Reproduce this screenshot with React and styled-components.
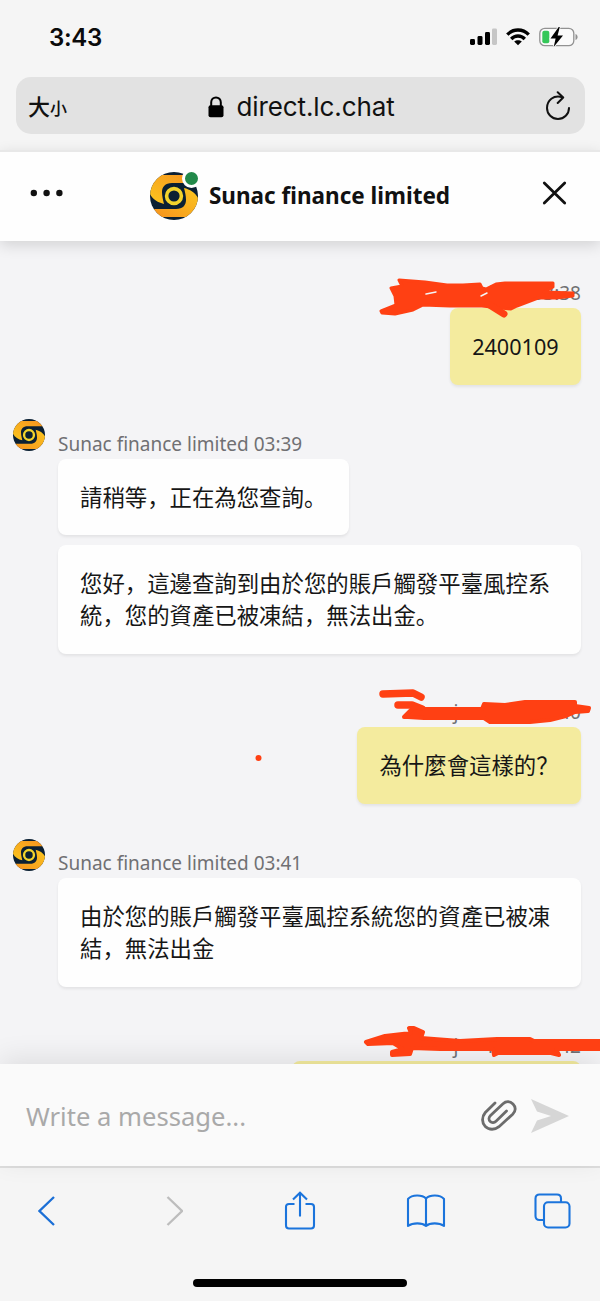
import React from 'react';
import styled, { createGlobalStyle, css } from 'styled-components';

const GlobalStyle = createGlobalStyle`
  * {
    box-sizing: border-box;
  }
  body {
    margin: 0;
    background: #f5f5f5;
  }
`;

const Screen = styled.div`
  position: relative;
  display: flex;
  flex-direction: column;
  width: 600px;
  height: 1301px;
  overflow: hidden;
  background: #f5f5f5;
  color: #111;
  font-family: 'Noto Sans', 'Noto Sans CJK SC', sans-serif;
`;

// Browser chrome

const StatusBar = styled.div`
  display: flex;
  align-items: center;
  justify-content: space-between;
  height: 77px;
  padding: 0 22px 3px 49px;
`;

const Clock = styled.span`
  padding-top: 2px;
  font: 600 24px/30px Inter, sans-serif;
  letter-spacing: -0.3px;
  color: #0b0b0b;
`;

const StatusIcons = styled.div`
  display: flex;
  align-items: center;
  gap: 9px;
`;

const AddressBar = styled.div`
  display: grid;
  grid-template-columns: 100px 1fr 100px;
  align-items: center;
  height: 57px;
  margin: 0 15px 16px 16px;
  padding: 0 14px 0 12px;
  border-radius: 15px;
  background: #e2e2e2;
`;

const TextSize = styled.span`
  padding-top: 2px;
  font: 500 22px/30px 'Noto Sans CJK SC', sans-serif;

  small {
    font-size: 17px;
  }
`;

const Url = styled.span`
  display: flex;
  align-items: center;
  justify-content: center;
  gap: 12px;
  padding: 2px 0 0 4px;
  font: 400 26px/30px Inter, sans-serif;
  letter-spacing: -0.1px;
`;

const Reload = styled.svg`
  justify-self: end;
`;

// Chat header

const Header = styled.header`
  position: relative;
  z-index: 1;
  display: flex;
  align-items: center;
  justify-content: space-between;
  flex: none;
  height: 91px;
  padding: 0 33px 8px 29px;
  border-top: 2px solid #e8e8e8;
  background: #fefefe;
  box-shadow: 0 4px 14px rgba(0, 0, 0, 0.14);
`;

const Brand = styled.div`
  display: flex;
  align-items: center;
  gap: 11px;
  padding: 6px 7px 0 0;
`;

const BrandLogo = styled.div`
  position: relative;
  display: flex;
`;

const OnlineDot = styled.span`
  position: absolute;
  top: -3px;
  right: -3px;
  width: 19px;
  height: 19px;
  border: 3px solid #fefefe;
  border-radius: 50%;
  background: #22894a;
`;

const Title = styled.h1`
  margin: 0;
  font-size: 22.5px;
  line-height: 30px;
  font-weight: 700;
`;

// Messages

const Messages = styled.main`
  flex: none;
  display: flex;
  flex-direction: column;
  gap: 47.8px;
  height: 823px;
  padding: 41px 19px 0 13px;
  overflow: hidden;
  background: #f4f4f6;
`;

const Group = styled.section`
  display: grid;
  grid-template-columns: 32px 1fr;
  column-gap: 13px;
`;

const Avatar = styled.div`
  height: 32px;
  margin-top: -13.5px;
`;

const Thread = styled.div`
  grid-column: 2;
  display: flex;
  flex-direction: column;
  align-items: ${({ $mine }) => ($mine ? 'flex-end' : 'flex-start')};
  gap: 9.5px;
`;

const Meta = styled.div`
  display: flex;
  height: 26px;
  margin-bottom: -9.5px;
  font-size: 19px;
  line-height: 23px;
  color: #707073;
  white-space: pre;
`;

const Initial = styled.span`
  width: ${({ $width }) => $width}px;
`;

const Bubble = styled.p`
  margin: 0;
  min-width: ${({ $minWidth }) => $minWidth || 0}px;
  min-height: 76.8px;
  padding: 21px 22.4px 23.8px 22px;
  border-radius: 8px;
  background: #fefefe;
  box-shadow: 0 2px 3px rgba(0, 0, 0, 0.07);
  font-family: 'Noto Sans CJK SC', sans-serif;
  font-size: 22.4px;
  line-height: 32px;
  color: #161616;
  ${({ $mine }) => $mine && css`
    background: #f4eb9e;
  `}
  ${({ $latin }) => $latin && css`
    padding-top: 22.8px;
    padding-bottom: 22px;
    font-family: 'Noto Sans', sans-serif;
    font-size: 21.6px;
  `}
`;

// Composer

const Composer = styled.div`
  position: relative;
  display: flex;
  align-items: center;
  flex: none;
  height: 102px;
  padding: 2px 31px 0 26px;
  background: #fafafa;
  box-shadow: 0 -6px 26px rgba(0, 0, 0, 0.09);
`;

const Placeholder = styled.span`
  flex: 1;
  font-size: 25.6px;
  color: #a9a9a9;
`;

const ComposerIcons = styled.div`
  display: flex;
  align-items: center;
  gap: 14px;
`;

const Toolbar = styled.nav`
  display: flex;
  align-items: center;
  justify-content: space-between;
  flex: none;
  height: 88px;
  padding: 0 28px;
  border-top: 2px solid #dedede;
`;

const ToolButton = styled.span`
  display: flex;
  justify-content: center;
  width: 40px;
`;

const HomeBar = styled.div`
  flex: none;
  width: 214px;
  height: 8px;
  margin: 25px 0 0 193px;
  border-radius: 4px;
  background: #000;
`;

const Scribbles = styled.svg`
  position: absolute;
  inset: 0;
  z-index: 2;
  pointer-events: none;
`;

function Logo({ size, id }) {
  const swirl = 'M45 11H22C15 11 12 15 12 20C12 24 13 28 14 32C6 30 -1 25 -2 15L6 3H40Z';
  return (
    <svg width={size} height={size} viewBox="0 0 48 48">
      <defs>
        <clipPath id={id}>
          <circle cx="24" cy="24" r="24" />
        </clipPath>
        <linearGradient id={`${id}-fill`} x1="0" y1="1" x2="1" y2="0">
          <stop offset="0" stopColor="#fbc81f" />
          <stop offset="1" stopColor="#f6921e" />
        </linearGradient>
      </defs>
      <g clipPath={`url(#${id})`}>
        <rect width="48" height="48" fill="#0b2033" />
        <path d={swirl} fill={`url(#${id}-fill)`} />
        <path d={swirl} fill={`url(#${id}-fill)`} transform="rotate(180 24 24)" />
        <circle cx="24" cy="24" r="10.8" fill="#0b2033" />
        <circle cx="24" cy="24" r="7.4" fill="none" stroke="#f2d32c" strokeWidth="3.6" />
      </g>
    </svg>
  );
}

function AgentGroup({ time, id, messages }) {
  return (
    <Group>
      <Avatar>
        <Logo size={32} id={id} />
      </Avatar>
      <Thread>
        <Meta>Sunac finance limited {time}</Meta>
        {messages.map((text) => (
          <Bubble key={text}>{text}</Bubble>
        ))}
      </Thread>
    </Group>
  );
}

function VisitorGroup({ time, text, latin, minWidth }) {
  return (
    <Group>
      <Thread $mine>
        <Meta>
          <Initial $width={34}>j</Initial>
          <Initial $width={45}>f</Initial>
          {time}
        </Meta>
        <Bubble $mine $latin={latin} $minWidth={minWidth}>{text}</Bubble>
      </Thread>
    </Group>
  );
}

export default function App() {
  return (
    <Screen>
      <GlobalStyle />
      <StatusBar>
        <Clock>3:43</Clock>
        <StatusIcons>
          <svg width="28" height="18" viewBox="0 0 28 18">
            <rect x="1" y="11" width="5" height="6" rx="1.4" />
            <rect x="8.5" y="8" width="5" height="9" rx="1.4" />
            <rect x="16" y="4" width="5" height="13" rx="1.4" />
            <rect x="23" y="0.5" width="5" height="16.5" rx="1.4" fill="#c6c6c6" />
          </svg>
          <svg width="24" height="18" viewBox="0 0 24 18" fill="none" stroke="#000" strokeWidth="3.3">
            <path d="M1.3 6.7C7.2.4 16.8.4 22.7 6.7" />
            <path d="M5.2 11C9 7 15 7 18.8 11" />
            <path d="M12 17.3L8.2 13.6C10.3 11.7 13.7 11.7 15.8 13.6Z" fill="#000" stroke="none" />
          </svg>
          <svg width="39" height="20" viewBox="0 0 39 20">
            <rect x="0.8" y="1.3" width="34" height="17.4" rx="5" fill="#fafafa" stroke="#929292" strokeWidth="1.3" />
            <path d="M36.5 7C39.3 8 39.3 12 36.5 13Z" fill="#929292" />
            <rect x="3.3" y="3.8" width="7" height="12.5" rx="2" fill="#35c759" />
            <path d="M19.7 0L11.5 11.4H16.6L14.7 20L24 8.5H18.6L20.8 0Z" stroke="#fafafa" strokeWidth="1.6" paintOrder="stroke" />
          </svg>
        </StatusIcons>
      </StatusBar>
      <AddressBar>
        <TextSize>大<small>小</small></TextSize>
        <Url>
          <svg width="16" height="22" viewBox="0 0 16 22">
            <path d="M3.2 10V6.2a4.8 4.8 0 0 1 9.6 0V10" fill="none" stroke="#000" strokeWidth="2" />
            <rect x="0.5" y="9.3" width="15" height="12" rx="2" />
          </svg>
          direct.lc.chat
        </Url>
        <Reload width="26" height="30" viewBox="0 0 26 30" fill="none" stroke="#111" strokeWidth="2" strokeLinecap="round" strokeLinejoin="round">
          <path d="M17.3 6.2C8.5 3.5 2 9.5 2 17a11 11 0 0 0 22 0" />
          <path d="M12.7 1.2L18.2 6.5L12.7 12" />
        </Reload>
      </AddressBar>

      <Header>
        <svg width="36" height="8" viewBox="0 0 36 8" fill="#111">
          <circle cx="4.8" cy="4" r="3.2" />
          <circle cx="17.6" cy="4" r="3.2" />
          <circle cx="30.4" cy="4" r="3.2" />
        </svg>
        <Brand>
          <BrandLogo>
            <Logo size={48} id="brand" />
            <OnlineDot />
          </BrandLogo>
          <Title>Sunac finance limited</Title>
        </Brand>
        <svg width="25" height="24" viewBox="0 0 25 24" stroke="#111" strokeWidth="2.8" strokeLinecap="round">
          <path d="M2.3 2L22.7 22M22.7 2L2.3 22" />
        </svg>
      </Header>

      <Messages>
        <VisitorGroup time="03:38" text="2400109" latin />
        <AgentGroup
          time="03:39"
          id="agent-a"
          messages={['請稍等，正在為您查詢。', '您好，這邊查詢到由於您的賬戶觸發平臺風控系統，您的資產已被凍結，無法出金。']}
        />
        <VisitorGroup time="03:40" text="為什麼會這樣的？" />
        <AgentGroup
          time="03:41"
          id="agent-b"
          messages={['由於您的賬戶觸發平臺風控系統您的資產已被凍結，無法出金']}
        />
        <VisitorGroup time="03:42" minWidth={289} />
      </Messages>

      <Composer>
        <Placeholder>Write a message...</Placeholder>
        <ComposerIcons>
          <svg width="36" height="34" viewBox="0 0 36 34" fill="none" stroke="#6c6c6c" strokeWidth="2.8" strokeLinecap="round">
            <path d="M14 4L4.3 13.5C.5 18 .8 24 4.3 27.5C8 31.2 14 31 18 27.7L31.7 15.2C35 12 35 8 32 5C29 2 25 2 22 4.8L9.3 16.7C7.6 18.6 7.6 21 9.2 22.5C10.8 24 13.3 23.8 15 22.2L25.5 12" />
          </svg>
          <svg width="38" height="34" viewBox="0 0 38 34" fill="#d6d6d6">
            <path d="M0 0L38 17L0 34L6 21.5L20 17L6 12.5Z" />
          </svg>
        </ComposerIcons>
      </Composer>

      <Toolbar>
        <ToolButton>
          <svg width="20" height="30" viewBox="0 0 20 30" fill="none" stroke="#1b6fd6" strokeWidth="2.3">
            <path d="M16 1L1.5 15L16 29" />
          </svg>
        </ToolButton>
        <ToolButton>
          <svg width="18" height="30" viewBox="0 0 18 30" fill="none" stroke="#bdbdbd" strokeWidth="2.3">
            <path d="M2.5 1L17 15L2.5 29" />
          </svg>
        </ToolButton>
        <ToolButton>
          <svg width="32" height="40" viewBox="0 0 32 40" fill="none" stroke="#1b74dc" strokeWidth="2.1">
            <path d="M10.5 13H5C3 13 2 14 2 16V34.5C2 36.5 3 37.5 5 37.5H27C29 37.5 30 36.5 30 34.5V16C30 14 29 13 27 13H21.5M16 25.5V2M9 8.5L16 1.7L23 8.5" />
          </svg>
        </ToolButton>
        <ToolButton>
          <svg width="40" height="36" viewBox="0 0 40 36" fill="none" stroke="#1b74dc" strokeWidth="2.1" strokeLinejoin="round">
            <path d="M20 33C16 29.5 7 29.5 2 33V6C6 1.5 16 1.5 20 5.5C24 1.5 34 1.5 38 6V33C33 29.5 24 29.5 20 33ZM20 5.5V33" />
          </svg>
        </ToolButton>
        <ToolButton>
          <svg width="37" height="36" viewBox="0 0 37 36" fill="none" stroke="#1b74dc" strokeWidth="2.1">
            <path d="M10 27H5.5C3 27 1.5 25.5 1.5 23V5.5C1.5 3 3 1.5 5.5 1.5H23C25.5 1.5 27 3 27 5.5V9" />
            <rect x="10" y="9.3" width="25.5" height="25.2" rx="4" />
          </svg>
        </ToolButton>
      </Toolbar>
      <HomeBar />

      <Scribbles width="600" height="1301" viewBox="0 0 600 1301" fill="#ff4013" stroke="#ff4013" strokeLinecap="round" strokeLinejoin="round">
        <path strokeWidth="3" d="M399 280L425 282L447 285H463L480 284L482 288L486 289L496 284L505 283H553L553 287L544 292L573 293V296L556 298H538L517 306L511 309L482 306H450L423 305L413 310L395 314L382 313L381 311L396 305L395 296L391 288L402 286Z" />
        <path strokeWidth="7" d="M488 304L504 314" />
        <path stroke="#f4f4f6" strokeWidth="1.5" d="M426 294L436 292M481 296L487 293" />
        <path strokeWidth="7.5" d="M383 694L413 693L421 697M398 705H412L422 709" />
        <path strokeWidth="4" d="M404 717L408 713L414 707L424 709H482L484 704L505 705L525 702H575V706L589 708L588 711L575 712L566 716L550 720L530 722H490L484 718H424L408 717Z" />
        <path strokeWidth="4" d="M366 1042L385 1036L411 1033L409 1028L414 1028L423 1032L421 1038L460 1041L497 1039H530L534 1041H600V1049H556L559 1055L551 1053H498L494 1055L493 1049H440L412 1048L410 1054L392 1055L392 1052L403 1049L393 1043L368 1044Z" />
        <circle cx="258.500" cy="758" r="3" stroke="none" />
      </Scribbles>
    </Screen>
  );
}
